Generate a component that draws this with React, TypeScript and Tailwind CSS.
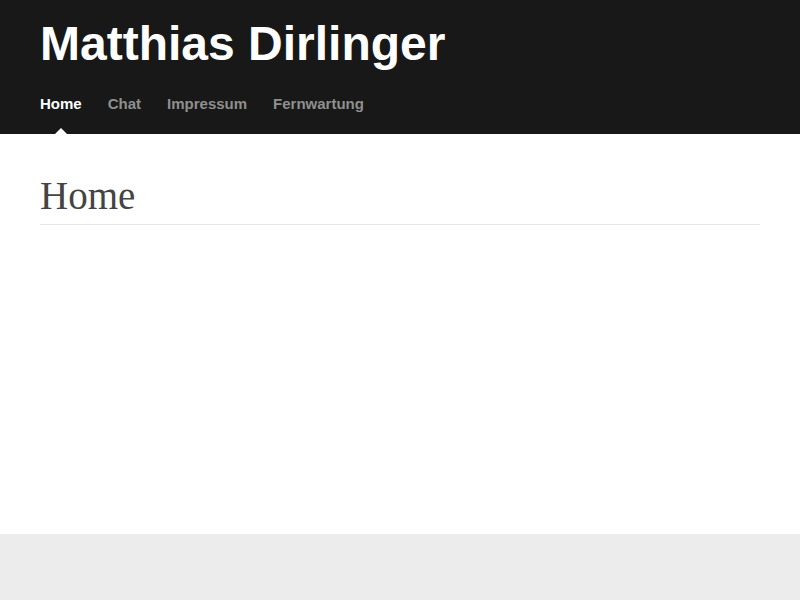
export default function App() {
  const nav = ["Home", "Chat", "Impressum", "Fernwartung"];

  return (
    <div className="min-h-screen flex flex-col bg-[#ececec] font-['Liberation_Sans',Arial,sans-serif]">
      <header className="bg-[#181818] px-10 pt-[20px]">
        <h1 className="text-[48px] leading-[48px] font-bold text-white">
          Matthias Dirlinger
        </h1>
        <nav className="mt-[26px]">
          <ul className="flex gap-[26px]">
            {nav.map((item, i) => (
              <li key={item} className="relative pb-[20px]">
                <a
                  href="#"
                  className={
                    i === 0
                      ? "block text-[15px] leading-[20px] font-bold text-white"
                      : "block text-[15px] leading-[20px] font-bold text-[#8f8f8f]"
                  }
                >
                  {item}
                </a>
                {i === 0 && (
                  <span className="absolute bottom-0 left-1/2 -translate-x-1/2 w-0 h-0 border-x-[6px] border-x-transparent border-b-[6px] border-b-white" />
                )}
              </li>
            ))}
          </ul>
        </nav>
      </header>

      <main className="bg-white h-[400px] px-10 pt-[40px]">
        <h2 className="font-['Liberation_Serif','Times_New_Roman',serif] text-[39px] leading-[44px] text-[#444444] pb-[6px] border-b border-[#e5e5e5]">
          Home
        </h2>
      </main>

      <footer className="flex-1 bg-[#ececec]" />
    </div>
  );
}
